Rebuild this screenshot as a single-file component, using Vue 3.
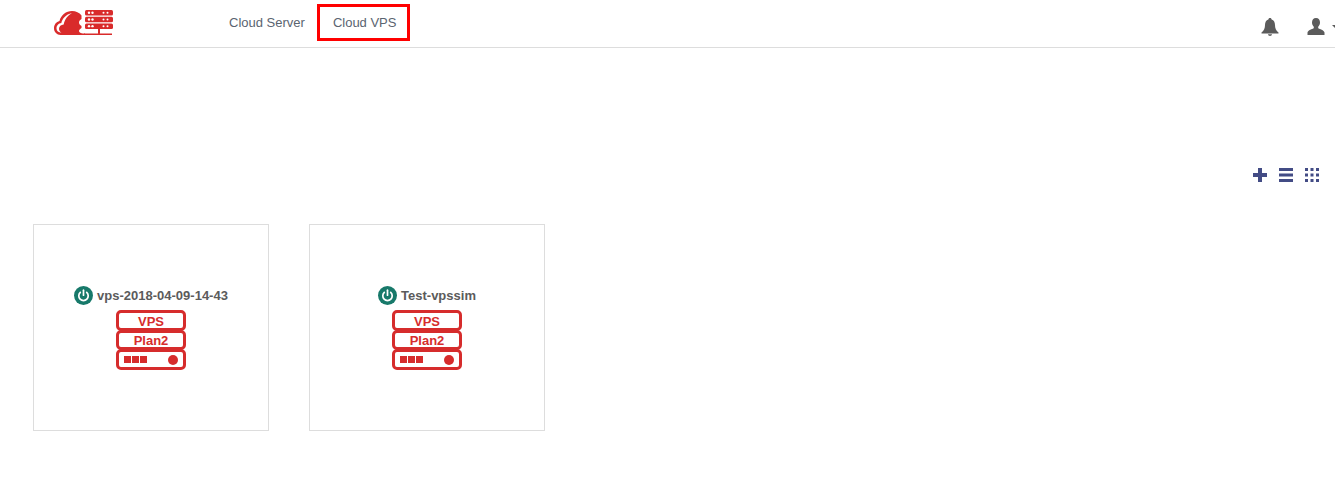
<script setup>
const cards = [
  { name: 'vps-2018-04-09-14-43' },
  { name: 'Test-vpssim' },
]
</script>

<template>
  <div class="page">
    <header class="top">
      <div class="logo">
        <svg width="60" height="40" viewBox="0 0 60 40">
          <path d="M0 28.500c0-3.800 2.200-6.700 5.500-7.500C7 15 12 11 18 11c3.800 0 7.500 1.500 9.500 4.500v3.500c-1.500.8-2.500 2-2.500 3.500s1 2.700 2.500 3.500v2c-1.500.8-2.500 2-2.500 3 0 1.500 2 2.500 4 2.500h2v1.500H6.500C3 35 0 32 0 28.500z" fill="#d92b2b" />
          <path d="M2.500 28.500c0-3.200 2.200-5.200 4.800-5.500C8.500 18.500 11.500 14.500 18 13c-4 2.500-7.300 5.800-8.300 11.500-2.700.2-4.700 2-4.700 4.200 0 1.700 1 3.200 2.500 4C4.500 32.500 2.500 31 2.500 28.500z" fill="#fff" />
          <rect x="31" y="10" width="28" height="5.500" rx="1.500" fill="#d92b2b" />
          <rect x="31" y="16.700" width="28" height="5.500" rx="1.500" fill="#d92b2b" />
          <rect x="31" y="23.400" width="28" height="5.500" rx="1.500" fill="#d92b2b" />
          <g fill="#fff">
            <circle cx="35" cy="12.750" r="1.200" /><circle cx="38.500" cy="12.750" r="1.200" /><circle cx="49.500" cy="12.750" r="1" /><circle cx="53.500" cy="12.750" r="1" />
            <circle cx="35" cy="19.450" r="1.200" /><circle cx="38.500" cy="19.450" r="1.200" /><circle cx="49.500" cy="19.450" r="1" /><circle cx="53.500" cy="19.450" r="1" />
            <circle cx="35" cy="26.150" r="1.200" /><circle cx="38.500" cy="26.150" r="1.200" /><circle cx="49.500" cy="26.150" r="1" /><circle cx="53.500" cy="26.150" r="1" />
          </g>
          <rect x="44" y="28.900" width="2" height="5" fill="#d92b2b" />
          <rect x="30" y="33.500" width="28" height="1.500" fill="#d92b2b" />
        </svg>
      </div>
      <nav class="nav">
        <a class="link">Cloud Server</a>
        <a class="link active">Cloud VPS</a>
      </nav>
      <div class="tools">
        <svg class="bell" width="18" height="20" viewBox="0 0 18 20">
          <path d="M9 1c1 0 1.600.6 1.600 1.500C13 3.200 14 5.500 14 8c0 3.500 1 5.500 3.500 7.500V16.500H.5V15.500C3 13.500 4 11.500 4 8c0-2.500 1-4.800 3.400-5.500C7.400 1.600 8 1 9 1z" fill="#5b5b5b" />
          <path d="M7 17.300h4c0 1-1 1.700-2 1.700s-2-.7-2-1.700z" fill="#5b5b5b" />
        </svg>
        <svg class="user" width="20" height="20" viewBox="0 0 20 20">
          <path d="M10 1c2.600 0 4 2 4 4.500 0 2-1 3.500-1.800 4.300v1.400c1.500 1 5.800 1.600 6.300 4.300V18h-17v-2.500c.5-2.700 4.800-3.300 6.300-4.300V9.800C7 9 6 7.500 6 5.500 6 3 7.400 1 10 1z" fill="#5b5b5b" />
        </svg>
        <span class="caret"></span>
      </div>
    </header>

    <div class="actions">
      <svg width="14" height="14" viewBox="0 0 14 14"><path d="M5 0h4v5h5v4H9v5H5V9H0V5h5z" fill="#434c85" /></svg>
      <svg width="14" height="14" viewBox="0 0 14 14"><path d="M0 0h14v3H0zM0 5.500h14v3H0zM0 11h14v3H0z" fill="#434c85" /></svg>
      <svg width="14" height="14" viewBox="0 0 14 14">
        <g fill="#434c85">
          <rect x="0" y="0" width="3" height="3" /><rect x="5.500" y="0" width="3" height="3" /><rect x="11" y="0" width="3" height="3" />
          <rect x="0" y="5.500" width="3" height="3" /><rect x="5.500" y="5.500" width="3" height="3" /><rect x="11" y="5.500" width="3" height="3" />
          <rect x="0" y="11" width="3" height="3" /><rect x="5.500" y="11" width="3" height="3" /><rect x="11" y="11" width="3" height="3" />
        </g>
      </svg>
    </div>

    <main class="grid">
      <article v-for="c in cards" :key="c.name" class="card">
        <div class="title">
          <span class="power">
            <svg width="19" height="19" viewBox="0 0 19 19">
              <circle cx="9.500" cy="9.500" r="9.500" fill="#17796a" />
              <path d="M6.300 6.400a4.700 4.700 0 1 0 6.400 0" fill="none" stroke="#fff" stroke-width="1.700" stroke-linecap="round" />
              <path d="M9.500 4.200v5" stroke="#fff" stroke-width="1.700" stroke-linecap="round" />
            </svg>
          </span>
          <span class="name">{{ c.name }}</span>
        </div>
        <div class="stack">
          <div class="slot">VPS</div>
          <div class="slot mid">Plan2</div>
          <div class="slot bottom">
            <span class="bars"><i></i><i></i><i></i></span>
            <span class="dot"></span>
          </div>
        </div>
      </article>
    </main>
  </div>
</template>

<style>
html, body { margin: 0; background: #fff; overflow: hidden; }
</style>

<style scoped>
.page {
  width: 1335px;
  height: 482px;
  overflow: hidden;
  font-family: "Liberation Sans", Arial, sans-serif;
  color: #555;
}
.top {
  height: 47px;
  border-bottom: 1px solid #ddd;
  display: flex;
  align-items: center;
}
.logo {
  width: 213px;
  padding-left: 54px;
  box-sizing: border-box;
  height: 47px;
}
.nav {
  display: flex;
  align-items: center;
  height: 47px;
}
.link {
  font-size: 13px;
  color: #5a6470;
  padding: 0 12px 0 16px;
  line-height: 20px;
  margin-top: -2px;
  white-space: nowrap;
}
.link.active {
  box-sizing: border-box;
  width: 93px;
  height: 37px;
  padding: 0 0 0 13px;
  border: 3px solid #f00;
  line-height: 31px;
  margin-top: -2px;
}
.tools {
  margin-left: auto;
  display: flex;
  align-items: center;
  position: relative;
  top: 3px;
}
.bell { margin-right: 27px; }
.user { margin-right: 6px; }
.caret {
  width: 0;
  height: 0;
  border-left: 4px solid transparent;
  border-right: 4px solid transparent;
  border-top: 4px solid #5b5b5b;
  margin-right: -5px;
}
.actions {
  display: flex;
  justify-content: flex-end;
  gap: 12px;
  padding: 120px 16px 0 0;
  height: 14px;
  align-items: center;
}
.grid {
  display: flex;
  gap: 40px;
  padding: 42px 0 0 33px;
}
.card {
  width: 236px;
  height: 207px;
  box-sizing: border-box;
  border: 1px solid #ddd;
  display: flex;
  flex-direction: column;
  align-items: center;
  padding-top: 61px;
}
.title {
  display: flex;
  align-items: center;
  gap: 4px;
  height: 19px;
}
.power { display: flex; }
.name {
  font-size: 13px;
  font-weight: 700;
  line-height: 19px;
  color: #5b5b5b;
  white-space: nowrap;
}
.stack {
  margin-top: 5px;
  width: 70px;
  display: flex;
  flex-direction: column;
}
.slot {
  box-sizing: border-box;
  height: 21px;
  border: 3px solid #d62c2c;
  border-radius: 5px;
  color: #d62c2c;
  font-size: 13px;
  font-weight: 700;
  line-height: 17px;
  text-align: center;
  margin-bottom: -1px;
}
.mid {
  height: 20px;
  line-height: 15px;
}
.bottom {
  display: flex;
  align-items: center;
  justify-content: space-between;
  padding: 0 5px;
  margin-bottom: 0;
}
.bars { display: flex; gap: 1px; }
.bars i {
  display: block;
  width: 7px;
  height: 7px;
  background: #d62c2c;
}
.dot {
  width: 10px;
  height: 10px;
  border-radius: 50%;
  background: #d62c2c;
}
</style>
